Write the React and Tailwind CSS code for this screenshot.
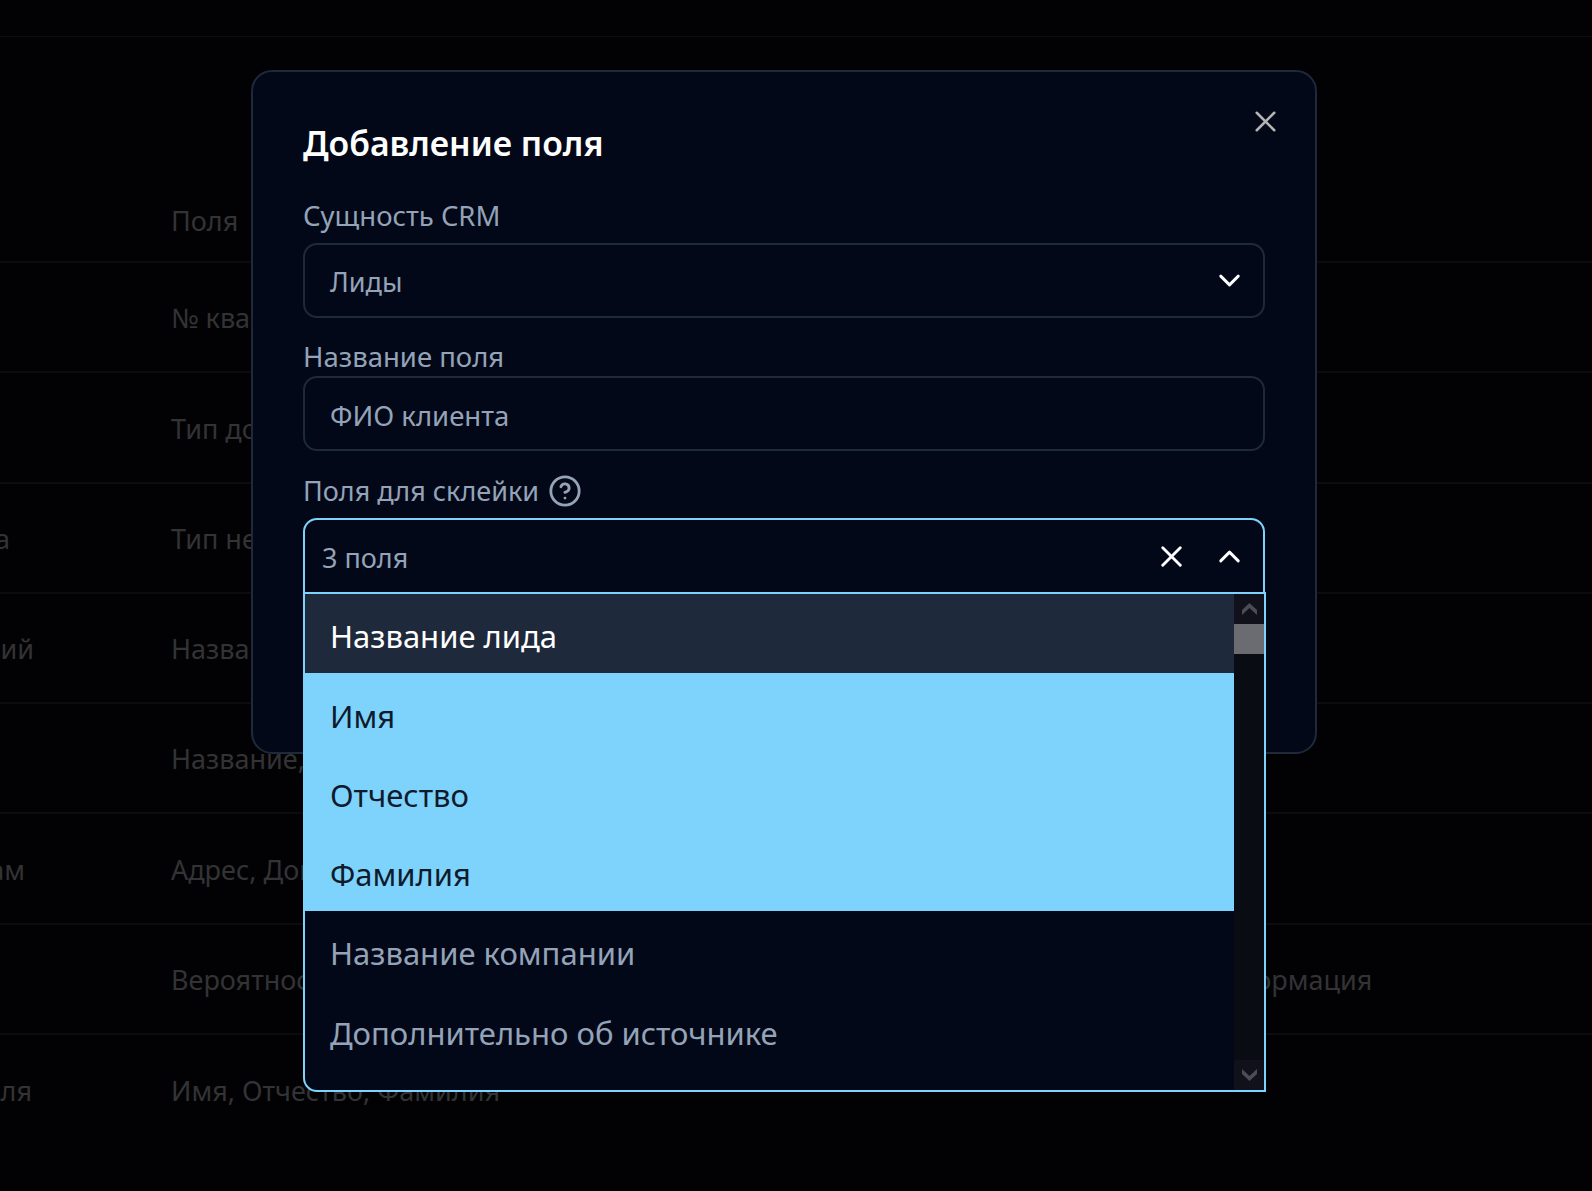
import { X, ChevronDown, ChevronUp, CircleHelp } from "lucide-react";

const rows = [
  { pad: "", side: "", text: "№ квартиры" },
  { pad: "", side: "", text: "Тип документа" },
  { pad: "pr-[161px]", side: "Квартира", text: "Тип недвижимости" },
  { pad: "pr-[137px]", side: "Комментарий", text: "Название ЖК" },
  { pad: "", side: "", text: "Название, Номер" },
  { pad: "pr-[146px]", side: "Адрес по документам", text: "Адрес, Дом, Корпус" },
  {
    pad: "",
    side: "",
    text: "Вероятность, Этап, Ответственная, Источник, Комментарий, Дополнительная информация",
  },
  { pad: "pr-[139px]", side: "Склеенные поля", text: "Имя, Отчество, Фамилия" },
];

const options = [
  { label: "Название лида", tone: "bg-[#1e293b] text-white" },
  { label: "Имя", tone: "bg-[#7dd3fc] text-[#0f1b2d]" },
  { label: "Отчество", tone: "bg-[#7dd3fc] text-[#0f1b2d]" },
  { label: "Фамилия", tone: "bg-[#7dd3fc] text-[#0f1b2d]" },
  { label: "Название компании", tone: "text-[#94a3b8]" },
  { label: "Дополнительно об источнике", tone: "text-[#94a3b8]" },
];

function BackgroundTable() {
  return (
    <div className="text-[27px] text-[#333335]">
      <div className="h-[37px] border-b border-[#0c0c0f]" />
      <div className="flex h-[226px] items-end border-b-2 border-[#0c0c0f] pb-[20px] pl-[171px]">
        <span>Поля</span>
      </div>
      {rows.map((row, i) => (
        <div
          key={row.text}
          className={`flex h-[110.25px] items-center pt-[3px] ${i < rows.length - 1 ? "border-b-2 border-[#0c0c0f]" : ""}`}
        >
          <div className={`flex w-[171px] shrink-0 justify-end overflow-hidden whitespace-nowrap ${row.pad}`}>
            {row.side}
          </div>
          <div className="whitespace-nowrap">{row.text}</div>
        </div>
      ))}
    </div>
  );
}

function Scrollbar() {
  return (
    <div className="flex w-[30px] shrink-0 flex-col bg-[#0a0c14]">
      <div className="flex h-[30px] items-center justify-center bg-[#10111a]">
        <svg width="15" height="12" viewBox="0 0 15 12">
          <polygon points="7.5,0 15,7 15,12 7.5,5 0,12 0,7" fill="#4b4c54" />
        </svg>
      </div>
      <div className="h-[30px] bg-[#6b6c72]" />
      <div className="flex-1" />
      <div className="flex h-[30px] items-center justify-center bg-[#10111a]">
        <svg width="15" height="12" viewBox="0 0 15 12">
          <polygon points="0,0 7.5,7 15,0 15,5 7.5,12 0,5" fill="#4b4c54" />
        </svg>
      </div>
    </div>
  );
}

export default function App() {
  return (
    <div className="relative h-screen overflow-hidden bg-[#020204] font-['Noto_Sans',sans-serif]">
      <BackgroundTable />

      {/* Modal */}
      <div className="absolute left-[251px] top-[70px] h-[684px] w-[1066px] rounded-[21px] border-2 border-[#1e293b] bg-[#020817] pl-[50px] pr-[50px]">
        <button className="absolute right-[32px] top-[32px] text-[#b4b4b4]">
          <X size={35} strokeWidth={1.75} />
        </button>

        <h2 className="mt-[49px] h-[44px] text-[33.75px] leading-[44px] font-semibold text-white">
          Добавление поля
        </h2>

        <div className="mt-[34px] h-[34px] text-[27.5px] leading-[34px] text-[#94a3b8]">Сущность CRM</div>
        <div className="mt-[10px] flex h-[75px] items-center justify-between rounded-[14px] border-2 border-[#1e293b] pl-[25px] pr-[16px] text-[27px] text-[#94a3b8]">
          <span className="pt-[4px]">Лиды</span>
          <ChevronDown size={35} className="text-white" />
        </div>

        <div className="mt-[22px] h-[34px] text-[27.5px] leading-[34px] text-[#94a3b8]">Название поля</div>
        <div className="mt-[2px] flex h-[75px] items-center rounded-[14px] border-2 border-[#1e293b] pl-[25px] pt-[4px] text-[27.5px] text-[#94a3b8]">
          ФИО клиента
        </div>

        <div className="mt-[23px] flex h-[34px] items-center gap-[9px] text-[27px] text-[#94a3b8]">
          <span>Поля для склейки</span>
          <CircleHelp size={34} strokeWidth={2} />
        </div>

        <div className="relative mt-[10px]">
          <div className="flex h-[76px] items-center rounded-t-[14px] border-2 border-[#7dd3fc] pl-[17px] pr-[16px] text-[27px] text-[#94a3b8]">
            <span className="flex-1 pt-[4px]">3 поля</span>
            <X size={35} className="mr-[23px] text-white" />
            <ChevronUp size={35} className="text-white" />
          </div>

          {/* Options list */}
          <div className="absolute left-0 top-[74px] flex h-[500px] w-[963px] overflow-hidden rounded-bl-[14px] border-2 border-[#7dd3fc] bg-[#020817]">
            <div className="flex-1 text-[31px]">
              {options.map((o) => (
                <div key={o.label} className={`flex h-[79.25px] items-center pl-[25px] pt-[6px] ${o.tone}`}>
                  {o.label}
                </div>
              ))}
            </div>
            <Scrollbar />
          </div>
        </div>
      </div>
    </div>
  );
}
